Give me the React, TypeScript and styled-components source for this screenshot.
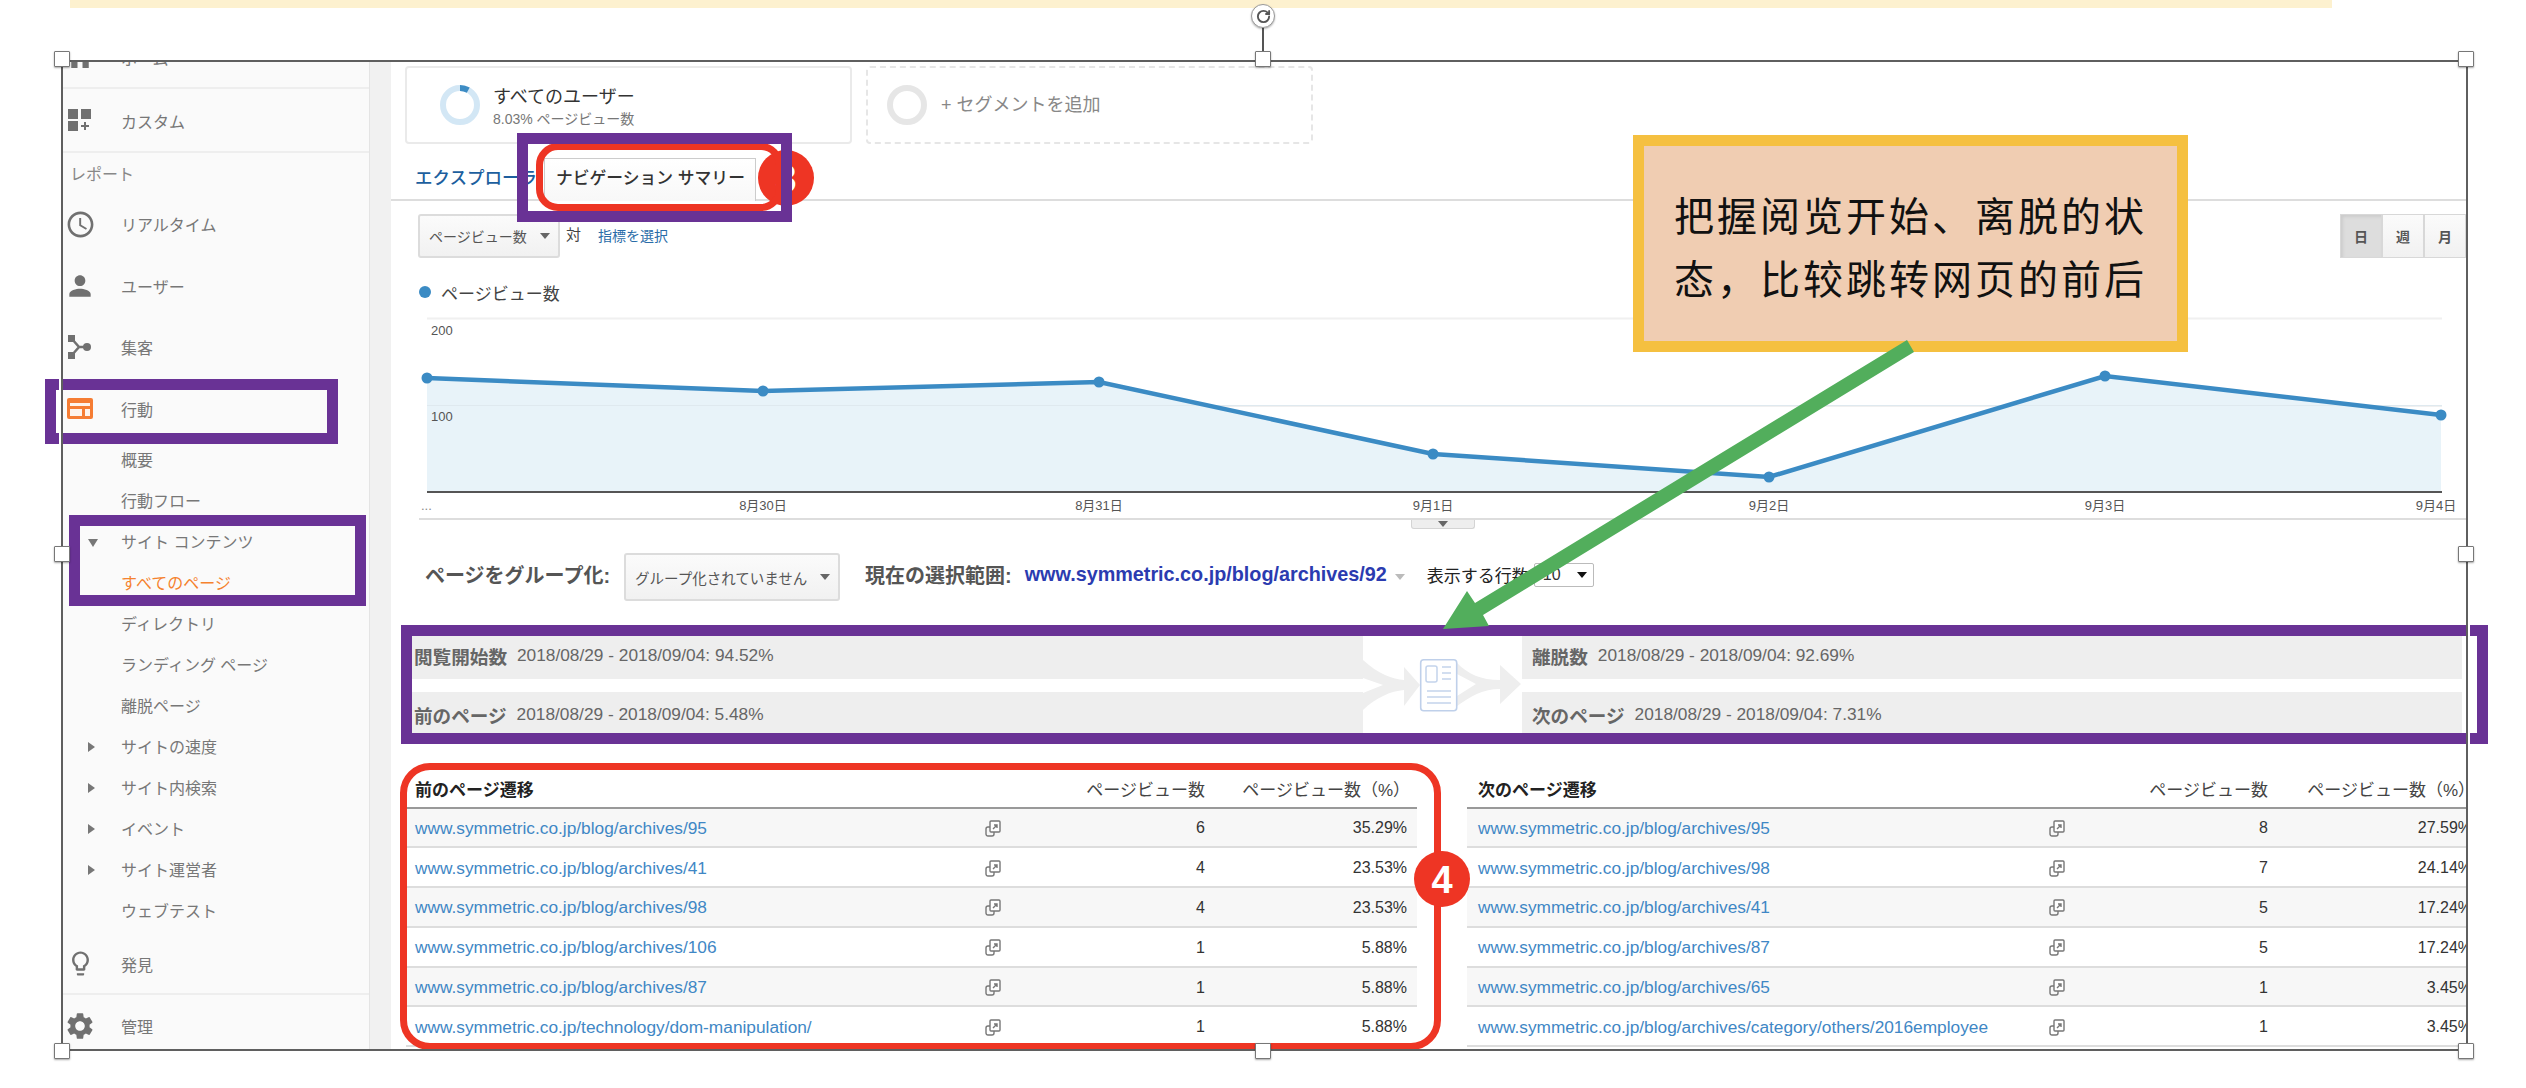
import { ReactNode } from 'react'
import styled, { createGlobalStyle } from 'styled-components'
import { MdAccessTime, MdHome, MdLightbulbOutline, MdPerson, MdSettings } from 'react-icons/md'
import { RotateCw } from 'lucide-react'

const GlobalStyle = createGlobalStyle`
  html, body { margin: 0; padding: 0; background: #fff; }
  body { font-family: "Liberation Sans", "Noto Sans CJK JP", sans-serif; }
  * { box-sizing: border-box; }
`

const Page = styled.div`
  position: relative;
  width: 2526px;
  height: 1088px;
  overflow: hidden;
  background: #fff;
`
const TopBar = styled.div`
  width: 2262px;
  height: 8px;
  margin-left: 70px;
  background: #fdf1cf;
`
const Shot = styled.div`
  display: flex;
  width: 2404px;
  height: 989px;
  margin: 53px 0 0 62px;
  overflow: hidden;
`

/* sidebar */
const Sidebar = styled.nav`
  flex: 0 0 308px;
  margin-top: -34px;
  background: #fafafa;
  border-right: 1px solid #e4e4e4;
`
const NavRow = styled.div<{ $h: number; $line?: boolean }>`
  display: flex;
  align-items: center;
  height: ${p => p.$h}px;
  padding-left: 59px;
  position: relative;
  font-size: 16px;
  color: #777;
  ${p => p.$line && 'box-shadow: inset 0 -2px #eee;'}
`
const NavIcon = styled.span<{ $color?: string }>`
  position: absolute;
  left: 2px;
  top: 0;
  bottom: 0;
  width: 32px;
  display: flex;
  align-items: center;
  justify-content: center;
  color: ${p => p.$color || '#707070'};
`
const NavLabel = styled.div`
  height: 40px;
  padding: 13px 0 0 8px;
  font-size: 16px;
  line-height: 18px;
  color: #888;
`
const SubRow = styled.div<{ $active?: boolean }>`
  position: relative;
  height: 41px;
  padding-left: 59px;
  line-height: 41px;
  font-size: 16px;
  color: ${p => (p.$active ? '#f5822e' : '#777')};
`
const Twisty = styled.span<{ $open?: boolean }>`
  position: absolute;
  left: 26px;
  top: 15px;
  width: 0;
  height: 0;
  ${p =>
    p.$open
      ? 'border-left: 5px solid transparent; border-right: 5px solid transparent; border-top: 8px solid #777; margin-top: 2px;'
      : 'border-top: 5px solid transparent; border-bottom: 5px solid transparent; border-left: 7px solid #777;'}
`
const Gutter = styled.div`
  flex: 0 0 21px;
  background: #f1f1f1;
`

/* main */
const Main = styled.main`
  flex: 0 0 2075px;
  width: 2075px;
  overflow: hidden;
  background: #fff;
`
const SegmentRow = styled.div`
  display: flex;
  gap: 14px;
  height: 78px;
  margin: 5px 0 0 14px;
`
const SegmentCard = styled.div<{ $dashed?: boolean }>`
  display: flex;
  align-items: center;
  gap: ${p => (p.$dashed ? 14 : 13)}px;
  width: 447px;
  padding-left: ${p => (p.$dashed ? 19 : 33)}px;
  border: 2px ${p => (p.$dashed ? 'dashed #e6e6e6' : 'solid #eaeaea')};
  border-radius: 4px;
`
const SegmentText = styled.div`
  padding-top: 3px;
`
const SegmentName = styled.div`
  font-size: 18px;
  line-height: 24px;
  color: #333;
`
const SegmentSub = styled.div`
  font-size: 14px;
  line-height: 20px;
  color: #777;
`
const AddSegment = styled.div`
  margin-top: -5px;
  font-size: 18px;
  color: #888;
`
const TabBar = styled.div`
  display: flex;
  align-items: flex-end;
  gap: 17px;
  height: 57px;
  padding-left: 24px;
  border-bottom: 2px solid #ddd;
`
const TabLink = styled.span`
  width: 112px;
  line-height: 42px;
  font-size: 17.5px;
  font-weight: 500;
  color: #1d5f9e;
  white-space: nowrap;
`
const Tab = styled.div`
  width: 212px;
  height: 43px;
  margin-bottom: -2px;
  padding-left: 11px;
  line-height: 40px;
  font-size: 16.8px;
  font-weight: 500;
  white-space: nowrap;
  color: #333;
  background: linear-gradient(#fff, #f8f8f8);
  border: 1px solid #ccc;
  border-bottom: 0;
`
const MetricRow = styled.div`
  display: flex;
  justify-content: space-between;
  height: 44px;
  margin-top: 13px;
  padding-left: 27px;
`
const MetricLeft = styled.div`
  display: flex;
  align-items: center;
  font-size: 14px;
  color: #444;
`
const SelectButton = styled.div<{ $w: number; $h: number; $fs?: number }>`
  display: flex;
  align-items: center;
  justify-content: space-between;
  width: ${p => p.$w}px;
  height: ${p => p.$h}px;
  padding: 0 8px 0 9px;
  font-size: ${p => p.$fs || 14}px;
  color: #555;
  white-space: nowrap;
  background: linear-gradient(#fbfbfb, #f1f1f1);
  border: 2px solid #dcdcdc;
  border-radius: 3px;
`
const Caret = styled.span<{ $dark?: boolean }>`
  width: 0;
  height: 0;
  border-left: 5px solid transparent;
  border-right: 5px solid transparent;
  border-top: 6px solid ${p => (p.$dark ? '#111' : '#666')};
`
const Versus = styled.span`
  margin: -5px 17px 0 6px;
  font-size: 15px;
`
const MetricLink = styled.span`
  margin-top: -2px;
  color: #2a6ca8;
  font-size: 14px;
`
const RangeToggle = styled.div`
  display: flex;
  height: 44px;
`
const RangeButton = styled.div<{ $on?: boolean }>`
  width: 42px;
  line-height: 44px;
  text-align: center;
  font-size: 14px;
  font-weight: 700;
  color: #555;
  border: 1px solid #d8d8d8;
  background: ${p => (p.$on ? '#ddd' : 'linear-gradient(#fbfbfb, #f1f1f1)')};
  ${p => p.$on && 'box-shadow: inset 2px 2px 3px #ccc;'}
`
const Legend = styled.div`
  display: flex;
  align-items: center;
  gap: 10px;
  height: 20px;
  margin: 24px 0 0 28px;
  font-size: 17px;
  color: #444;
`
const LegendDot = styled.span`
  width: 12px;
  height: 12px;
  border-radius: 50%;
  background: #3b8bc4;
`
const ChartSvg = styled.svg`
  display: block;
  margin-top: 8px;
`
const Rule = styled.div`
  height: 2px;
  margin-left: 28px;
  background: #ddd;
`
const CollapseTab = styled.div`
  display: flex;
  justify-content: center;
  align-items: center;
  width: 64px;
  height: 9px;
  margin-left: 1020px;
  background: #eee;
  border: 1px solid #d4d4d4;
  border-top: 0;
  border-radius: 0 0 3px 3px;
`
const GroupRow = styled.div`
  display: flex;
  align-items: center;
  height: 48px;
  margin-top: 24px;
  padding-left: 34px;
`
const GroupLabel = styled.span<{ $left?: number; $right: number }>`
  margin: -5px ${p => p.$right}px 0 ${p => p.$left || 0}px;
  font-size: 20px;
  font-weight: 700;
  color: #555;
  white-space: nowrap;
`
const RangeLink = styled.span`
  margin-top: -5px;
  font-size: 19.8px;
  font-weight: 700;
  color: #2b3bb0;
  white-space: nowrap;
`
const RangeCaret = styled(Caret)`
  margin: 0 0 0 8px;
  border-top-color: #bbb;
`
const RowsLabel = styled.span`
  margin: -5px 5px 0 22px;
  width: 102px;
  font-size: 17px;
  color: #222;
  white-space: nowrap;
`
const RowsSelect = styled.div`
  display: flex;
  align-items: center;
  justify-content: space-between;
  width: 60px;
  height: 24px;
  margin-top: -4px;
  padding: 0 6px 0 8px;
  font-size: 16px;
  color: #333;
  background: #fff;
  border: 1px solid #bbb;
  border-radius: 2px;
`

const FlowSection = styled.section`
  display: grid;
  grid-template-columns: 951px 159px 940px;
  height: 99px;
  margin: 35px 0 0 21px;
`
const FlowColumn = styled.div`
  display: flex;
  flex-direction: column;
  gap: 13px;
`
const FlowBar = styled.div<{ $right?: boolean }>`
  display: flex;
  align-items: center;
  gap: 10px;
  height: 43px;
  padding-left: ${p => (p.$right ? 10 : 2)}px;
  background: #eee;
  &:first-child {
    padding-bottom: 4px;
  }
  &:last-child {
    padding-top: 2px;
  }
`
const FlowName = styled.span`
  font-size: 18.6px;
  font-weight: 700;
  color: #666;
`
const FlowDate = styled.span`
  font-size: 17.3px;
  color: #666;
  white-space: nowrap;
`
const FlowArt = styled.svg`
  display: block;
`

const Tables = styled.div`
  display: flex;
  gap: 50px;
  margin: 35px 0 0 15px;
`
const Table = styled.div`
  flex: 0 0 1011px;
`
const TableRow = styled.div<{ $kind: 'head' | 'odd' | 'even'; $right?: boolean }>`
  display: grid;
  grid-template-columns: ${p => (p.$right ? '571px 16px 203px 204px' : '570px 16px 204px 202px')};
  align-items: center;
  height: ${p => (p.$kind === 'head' ? 38.5 : 39.8)}px;
  padding-left: ${p => (p.$right ? 11 : 9)}px;
  padding-top: ${p => (p.$kind === 'head' ? 0 : 2)}px;
  font-size: 16px;
  color: #333;
  border-bottom: ${p => (p.$kind === 'head' ? '2.5px solid #999' : '2px solid #ddd')};
  background: ${p => (p.$kind === 'odd' ? '#f7f7f7' : '#fff')};
`
const HeadTitle = styled.span`
  font-size: 17px;
  font-weight: 700;
  color: #222;
`
const HeadCell = styled.span<{ $pct?: boolean }>`
  text-align: right;
  font-size: 17px;
  white-space: nowrap;
  color: #444;
  ${p => p.$pct && 'margin-right: -3px;'}
`
const RowLink = styled.span`
  font-size: 17.3px;
  color: #3f87c5;
  white-space: nowrap;
`
const NumCell = styled.span`
  text-align: right;
`

/* annotations laid over the screenshot */
const PurpleBox = styled.div<{ $x: number; $y: number; $w: number; $h: number }>`
  position: absolute;
  left: ${p => p.$x}px;
  top: ${p => p.$y}px;
  width: ${p => p.$w}px;
  height: ${p => p.$h}px;
  border: 11px solid #693295;
`
const RedBox = styled.div<{ $x: number; $y: number; $w: number; $h: number; $r: number }>`
  position: absolute;
  left: ${p => p.$x}px;
  top: ${p => p.$y}px;
  width: ${p => p.$w}px;
  height: ${p => p.$h}px;
  border: 7px solid #ee3524;
  border-radius: ${p => p.$r}px;
`
const RedBadge = styled.div<{ $x: number; $y: number }>`
  position: absolute;
  left: ${p => p.$x - 28}px;
  top: ${p => p.$y - 28}px;
  width: 56px;
  height: 56px;
  border-radius: 50%;
  background: #ee3524;
  color: #fff;
  text-align: center;
  line-height: 58px;
  font-size: 38px;
  font-weight: 700;
`
const FrameLine = styled.div`
  position: absolute;
  left: 61px;
  top: 60px;
  width: 2407px;
  height: 991px;
  border: 2px solid #5f5f5f;
  box-shadow: 0 0 0 2px #fff;
`
const Handle = styled.div<{ $x: number; $y: number }>`
  position: absolute;
  left: ${p => p.$x - 8}px;
  top: ${p => p.$y - 8}px;
  width: 16px;
  height: 16px;
  background: #fff;
  border: 1px solid #777;
  border-radius: 1px;
  box-shadow: 0 1px 2px rgba(0, 0, 0, 0.35);
`
const RotateStem = styled.div`
  position: absolute;
  left: 1262px;
  top: 26px;
  width: 2px;
  height: 26px;
  background: #555;
`
const RotateKnob = styled.div`
  position: absolute;
  left: 1251px;
  top: 4px;
  width: 24px;
  height: 24px;
  display: flex;
  align-items: center;
  justify-content: center;
  background: #fff;
  border: 1px solid #999;
  border-radius: 50%;
  color: #555;
  box-shadow: 0 1px 2px rgba(0, 0, 0, 0.3);
`
const Callout = styled.div`
  position: absolute;
  left: 1633px;
  top: 135px;
  width: 555px;
  height: 217px;
  padding: 40px 0 0 30px;
  border: solid #f5c040;
  border-width: 11px;
  background: #f0cdb2;
  font-family: "Liberation Sans", "Noto Sans CJK SC", sans-serif;
  font-size: 40px;
  letter-spacing: 3px;
  line-height: 63px;
  color: #111;
  white-space: nowrap;
`
const ArrowSvg = styled.svg`
  position: absolute;
  left: 0;
  top: 0;
  pointer-events: none;
`

const navSub: { text: string; twisty?: 'open' | 'closed'; active?: boolean }[] = [
  { text: '概要' },
  { text: '行動フロー' },
  { text: 'サイト コンテンツ', twisty: 'open' },
  { text: 'すべてのページ', active: true },
  { text: 'ディレクトリ' },
  { text: 'ランディング ページ' },
  { text: '離脱ページ' },
  { text: 'サイトの速度', twisty: 'closed' },
  { text: 'サイト内検索', twisty: 'closed' },
  { text: 'イベント', twisty: 'closed' },
  { text: 'サイト運営者', twisty: 'closed' },
  { text: 'ウェブテスト' },
]

const prevPages = [
  ['www.symmetric.co.jp/blog/archives/95', '6', '35.29%'],
  ['www.symmetric.co.jp/blog/archives/41', '4', '23.53%'],
  ['www.symmetric.co.jp/blog/archives/98', '4', '23.53%'],
  ['www.symmetric.co.jp/blog/archives/106', '1', '5.88%'],
  ['www.symmetric.co.jp/blog/archives/87', '1', '5.88%'],
  ['www.symmetric.co.jp/technology/dom-manipulation/', '1', '5.88%'],
]
const nextPages = [
  ['www.symmetric.co.jp/blog/archives/95', '8', '27.59%'],
  ['www.symmetric.co.jp/blog/archives/98', '7', '24.14%'],
  ['www.symmetric.co.jp/blog/archives/41', '5', '17.24%'],
  ['www.symmetric.co.jp/blog/archives/87', '5', '17.24%'],
  ['www.symmetric.co.jp/blog/archives/65', '1', '3.45%'],
  ['www.symmetric.co.jp/blog/archives/category/others/2016employee', '1', '3.45%'],
]

const points: [number, number][] = [
  [427, 378],
  [763, 391],
  [1099, 382],
  [1433, 454],
  [1769, 477],
  [2105, 376],
  [2441, 415],
]
const dates: [number, string][] = [
  [763, '8月30日'],
  [1099, '8月31日'],
  [1433, '9月1日'],
  [1769, '9月2日'],
  [2105, '9月3日'],
  [2436, '9月4日'],
]
const handles: [number, number][] = [
  [62, 59],
  [1263, 59],
  [2466, 59],
  [62, 554],
  [2466, 554],
  [62, 1051],
  [1263, 1051],
  [2466, 1051],
]

const CustomIcon = () => (
  <svg width="24" height="24" viewBox="0 0 24 24" fill="#707070">
    <rect x="0" y="0" width="10" height="10" />
    <rect x="13" y="0" width="10" height="10" />
    <rect x="0" y="12" width="10" height="10" />
    <path d="M16 13h2v3h3v2h-3v3h-2v-3h-3v-2h3z" />
  </svg>
)
const AcquisitionIcon = () => (
  <svg width="24" height="26" viewBox="0 0 24 26" fill="#707070">
    <rect x="0" y="1" width="7" height="7" />
    <rect x="0" y="18" width="7" height="7" />
    <circle cx="19" cy="13" r="4" />
    <path d="M4 5l7 8-7 8M11 13h8" fill="none" stroke="#707070" strokeWidth="2.5" />
  </svg>
)
const BehaviorIcon = () => (
  <svg width="26" height="21" viewBox="0 0 26 21">
    <rect width="26" height="21" rx="2" fill="#f57c33" />
    <path d="M3 5h20v3H3zM3 11h12v7H3zM18 11h5v7h-5z" fill="#fdf3ec" />
  </svg>
)
const CopyIcon = () => (
  <svg width="16" height="17" viewBox="0 0 16 17" fill="none">
    <rect x="1" y="7" width="8" height="9" rx="2" stroke="#777" strokeWidth="1.4" />
    <rect x="5" y="1" width="10" height="11" rx="1" fill="#fff" stroke="#777" strokeWidth="1.4" />
    <path d="M8 9l4-4M9 5h3v3" stroke="#777" strokeWidth="1.4" />
  </svg>
)
const Donut = ({ active }: { active?: boolean }) => (
  <svg width="40" height="40" viewBox="0 0 40 40" fill="none">
    <circle cx="20" cy="20" r="17" stroke={active ? '#d3e7f5' : '#e6e6e6'} strokeWidth="6" />
    {active && (
      <circle
        cx="20"
        cy="20"
        r="17"
        stroke="#3d8cc4"
        strokeWidth="6"
        strokeDasharray="8.6 98.2"
        transform="rotate(-90 20 20)"
      />
    )}
  </svg>
)

const Flow = () => (
  <FlowArt width="159" height="99" viewBox="0 0 159 99">
    <path
      d="M0 24C15 38 30 43 41 44V31L57 49 41 70V54C28 55 12 62 0 74V57L20 49 0 42Z"
      fill="#eee"
    />
    <path
      d="M94 27C105 38 118 44 137 44V29L158 48 137 68V53C120 53 108 60 94 70V60L113 48 94 38Z"
      fill="#eee"
    />
    <rect x="57.7" y="23.7" width="36" height="51" rx="3" fill="#fff" stroke="#bfd0ea" strokeWidth="1.6" />
    <rect x="63" y="30" width="11" height="16" rx="2" fill="none" stroke="#c4d4ec" strokeWidth="1.5" />
    <path
      d="M79 31h9M79 37h9M79 43h9M64 55h24M64 61h24M64 67h24"
      stroke="#c4d4ec"
      strokeWidth="1.5"
    />
  </FlowArt>
)

const PageTable = ({
  title,
  rows,
  right,
}: {
  title: string
  rows: string[][]
  right?: boolean
}) => (
  <Table>
    <TableRow $kind="head" $right={right}>
      <HeadTitle>{title}</HeadTitle>
      <span />
      <HeadCell>ページビュー数</HeadCell>
      <HeadCell $pct>ページビュー数（%）</HeadCell>
    </TableRow>
    {rows.map(([url, views, pct], i) => (
      <TableRow key={url} $kind={i % 2 === 0 ? 'odd' : 'even'} $right={right}>
        <RowLink>{url}</RowLink>
        <CopyIcon />
        <NumCell>{views}</NumCell>
        <NumCell>{pct}</NumCell>
      </TableRow>
    ))}
  </Table>
)

const Nav = ({
  h,
  line,
  icon,
  color,
  children,
}: {
  h: number
  line?: boolean
  icon: ReactNode
  color?: string
  children: ReactNode
}) => (
  <NavRow $h={h} $line={line}>
    <NavIcon $color={color}>{icon}</NavIcon>
    {children}
  </NavRow>
)

const Chart = () => {
  const line = points.map(([x, y]) => `${x},${y}`).join(' ')
  return (
    <ChartSvg width="2075" height="208" viewBox="391 310 2075 208">
      <path d="M427 318.5H2442M427 406H2442" stroke="#f0f0f0" strokeWidth="2" />
      <polygon points={`427,492 ${line} 2441,492`} fill="#e8f3f9" />
      <path d="M427 405.5H2442" stroke="#dfe9ef" strokeWidth="1" />
      <path d="M427 492H2442" stroke="#555" strokeWidth="2" />
      <polyline points={line} fill="none" stroke="#3b8bc4" strokeWidth="4.5" />
      {points.map(([x, y]) => (
        <circle key={x} cx={x} cy={y} r="5.5" fill="#3b8bc4" />
      ))}
      <g fontFamily='"Liberation Sans", "Noto Sans CJK JP", sans-serif' fontSize="13" fill="#555">
        <text x="431" y="335">200</text>
        <text x="431" y="421">100</text>
        <text x="421" y="510" fill="#888">...</text>
        {dates.map(([x, label]) => (
          <text key={label} x={x} y="510" textAnchor="middle">{label}</text>
        ))}
      </g>
    </ChartSvg>
  )
}

export default function App() {
  return (
    <Page>
      <GlobalStyle />
      <TopBar />
      <Shot>
        <Sidebar>
          <Nav h={62} line icon={<MdHome size={30} />}>ホーム</Nav>
          <Nav h={64} line icon={<CustomIcon />}>カスタム</Nav>
          <NavLabel>レポート</NavLabel>
          <Nav h={62} icon={<MdAccessTime size={31} />}>リアルタイム</Nav>
          <Nav h={61} icon={<MdPerson size={32} />}>ユーザー</Nav>
          <Nav h={61} icon={<AcquisitionIcon />}>集客</Nav>
          <Nav h={63} icon={<BehaviorIcon />}>行動</Nav>
          {navSub.map(item => (
            <SubRow key={item.text} $active={item.active}>
              {item.twisty && <Twisty $open={item.twisty === 'open'} />}
              {item.text}
            </SubRow>
          ))}
          <Nav h={63} line icon={<MdLightbulbOutline size={29} />}>発見</Nav>
          <Nav h={62} icon={<MdSettings size={32} />}>管理</Nav>
        </Sidebar>
        <Gutter />
        <Main>
          <SegmentRow>
            <SegmentCard>
              <Donut active />
              <SegmentText>
                <SegmentName>すべてのユーザー</SegmentName>
                <SegmentSub>8.03% ページビュー数</SegmentSub>
              </SegmentText>
            </SegmentCard>
            <SegmentCard $dashed>
              <Donut />
              <AddSegment>+ セグメントを追加</AddSegment>
            </SegmentCard>
          </SegmentRow>
          <TabBar>
            <TabLink>エクスプローラ</TabLink>
            <Tab>ナビゲーション サマリー</Tab>
          </TabBar>
          <MetricRow>
            <MetricLeft>
              <SelectButton $w={142} $h={44}>
                ページビュー数
                <Caret />
              </SelectButton>
              <Versus>対</Versus>
              <MetricLink>指標を選択</MetricLink>
            </MetricLeft>
            <RangeToggle>
              <RangeButton $on>日</RangeButton>
              <RangeButton>週</RangeButton>
              <RangeButton>月</RangeButton>
            </RangeToggle>
          </MetricRow>
          <Legend>
            <LegendDot />
            ページビュー数
          </Legend>
          <Chart />
          <Rule />
          <CollapseTab>
            <Caret />
          </CollapseTab>
          <GroupRow>
            <GroupLabel $right={14}>ページをグループ化:</GroupLabel>
            <SelectButton $w={216} $h={48} $fs={14.5}>
              グループ化されていません
              <Caret />
            </SelectButton>
            <GroupLabel $left={25} $right={13}>現在の選択範囲:</GroupLabel>
            <RangeLink>www.symmetric.co.jp/blog/archives/92</RangeLink>
            <RangeCaret />
            <RowsLabel>表示する行数</RowsLabel>
            <RowsSelect>
              10
              <Caret $dark />
            </RowsSelect>
          </GroupRow>
          <FlowSection>
            <FlowColumn>
              <FlowBar>
                <FlowName>閲覧開始数</FlowName>
                <FlowDate>2018/08/29 - 2018/09/04: 94.52%</FlowDate>
              </FlowBar>
              <FlowBar>
                <FlowName>前のページ</FlowName>
                <FlowDate>2018/08/29 - 2018/09/04: 5.48%</FlowDate>
              </FlowBar>
            </FlowColumn>
            <Flow />
            <FlowColumn>
              <FlowBar $right>
                <FlowName>離脱数</FlowName>
                <FlowDate>2018/08/29 - 2018/09/04: 92.69%</FlowDate>
              </FlowBar>
              <FlowBar $right>
                <FlowName>次のページ</FlowName>
                <FlowDate>2018/08/29 - 2018/09/04: 7.31%</FlowDate>
              </FlowBar>
            </FlowColumn>
          </FlowSection>
          <Tables>
            <PageTable title="前のページ遷移" rows={prevPages} />
            <PageTable title="次のページ遷移" rows={nextPages} right />
          </Tables>
        </Main>
      </Shot>

      <RedBadge $x={786} $y={178}>3</RedBadge>
      <RedBox $x={536} $y={143} $w={247} $h={68} $r={22} />
      <RedBox $x={400} $y={763} $w={1041} $h={287} $r={30} />
      <RedBadge $x={1442} $y={879}>4</RedBadge>
      <PurpleBox $x={517} $y={133} $w={275} $h={89} />
      <PurpleBox $x={45} $y={379} $w={293} $h={65} />
      <PurpleBox $x={69} $y={515} $w={297} $h={91} />
      <PurpleBox $x={401} $y={625} $w={2087} $h={119} />
      <FrameLine />
      <RotateStem />
      <RotateKnob>
        <RotateCw size={15} strokeWidth={3} />
      </RotateKnob>
      {handles.map(([x, y]) => (
        <Handle key={`${x}-${y}`} $x={x} $y={y} />
      ))}
      <Callout>
        把握阅览开始、离脱的状
        <br />
        态，比较跳转网页的前后
      </Callout>
      <ArrowSvg width="2526" height="1088" viewBox="0 0 2526 1088">
        <polygon
          points="1443,629 1467,591 1475,603 1907,340 1914,352 1483,615 1489,626"
          fill="#52ae5c"
        />
      </ArrowSvg>
    </Page>
  )
}
